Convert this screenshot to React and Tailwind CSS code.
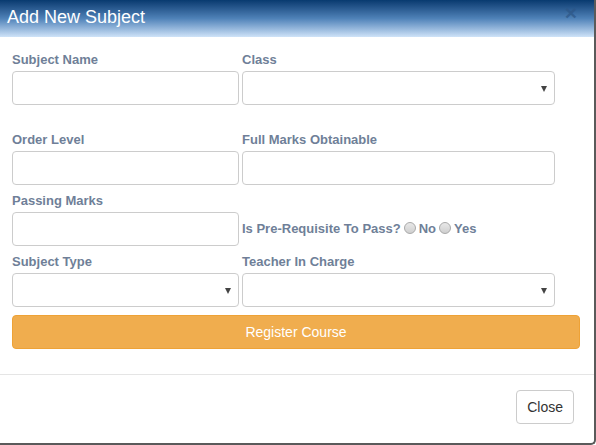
import { useState } from "react";

const labelCls = "block text-[13px] font-bold text-[#6f7f98] leading-[15px] mb-[4px]";
const inputCls = "block w-full h-[34px] bg-white border border-[#ccc] rounded-[4px] px-3 text-[14px] text-[#555] outline-none";

function Field({ label, width, children }) {
  return (
    <div className={width}>
      <label className={labelCls}>{label}</label>
      {children}
    </div>
  );
}

function FakeSelect() {
  return (
    <div className={`${inputCls} relative`}>
      <span className="absolute right-[7px] top-[14px] w-0 h-0 border-l-[3.5px] border-r-[3.5px] border-t-[6px] border-l-transparent border-r-transparent border-t-[#444]" />
    </div>
  );
}

function Radio({ onClick }) {
  return (
    <span
      onClick={onClick}
      className="inline-block w-[12px] h-[12px] rounded-full border border-[#a9a9a9] bg-gradient-to-b from-[#e8e8e8] to-[#cfcfcf] mx-[3px] align-[-1px]"
    />
  );
}

export default function App() {
  const [prereq, setPrereq] = useState(null);

  return (
    <div className="w-[596px] h-[445px] bg-white border-r-2 border-b-2 border-[#5a5a5a] rounded-br-[5px] overflow-hidden font-['Liberation_Sans',Arial,sans-serif]">
      {/* header */}
      <div className="h-[37px] bg-gradient-to-b from-[#073a6f] via-[#4f82b8] to-[#cfe3f8] flex items-center justify-between pl-[7px] pr-[17px]">
        <h4 className="text-white text-[18px] leading-[20px] mt-[-4px]">Add New Subject</h4>
        <span className="text-[#2d5686] text-[21px] font-bold leading-none mt-[-12px] opacity-70">×</span>
      </div>

      {/* body */}
      <div className="pl-[12px] pr-[14px] pt-[15px]">
        <div className="flex gap-[3px]">
          <Field label="Subject Name" width="w-[227px]">
            <input className={inputCls} />
          </Field>
          <Field label="Class" width="w-[313px]">
            <FakeSelect />
          </Field>
        </div>

        <div className="flex gap-[3px] mt-[27px]">
          <Field label="Order Level" width="w-[227px]">
            <input className={inputCls} />
          </Field>
          <Field label="Full Marks Obtainable" width="w-[313px]">
            <input className={inputCls} />
          </Field>
        </div>

        <div className="flex gap-[3px] mt-[8px]">
          <Field label="Passing Marks" width="w-[227px]">
            <input className={inputCls} />
          </Field>
          <div className="flex items-end pb-[10px]">
            <span className="text-[13px] font-bold text-[#6f7f98] leading-[15px]">
              Is Pre-Requisite To Pass?
              <Radio onClick={() => setPrereq("no")} />
              No
              <Radio onClick={() => setPrereq("yes")} />
              Yes
            </span>
          </div>
        </div>

        <div className="flex gap-[3px] mt-[8px]">
          <Field label="Subject Type" width="w-[227px]">
            <FakeSelect />
          </Field>
          <Field label="Teacher In Charge" width="w-[313px]">
            <FakeSelect />
          </Field>
        </div>

        <button className="mt-[8px] w-[568px] h-[34px] bg-[#f0ad4e] border border-[#eea236] rounded-[4px] text-white text-[14px]">
          Register Course
        </button>
      </div>

      {/* footer */}
      <div className="mt-[25px] border-t border-[#e5e5e5] flex justify-end pr-[20px] pt-[15px]">
        <button className="h-[34px] px-[10px] bg-white border border-[#ccc] rounded-[4px] text-[#333] text-[14px]">
          Close
        </button>
      </div>
    </div>
  );
}
